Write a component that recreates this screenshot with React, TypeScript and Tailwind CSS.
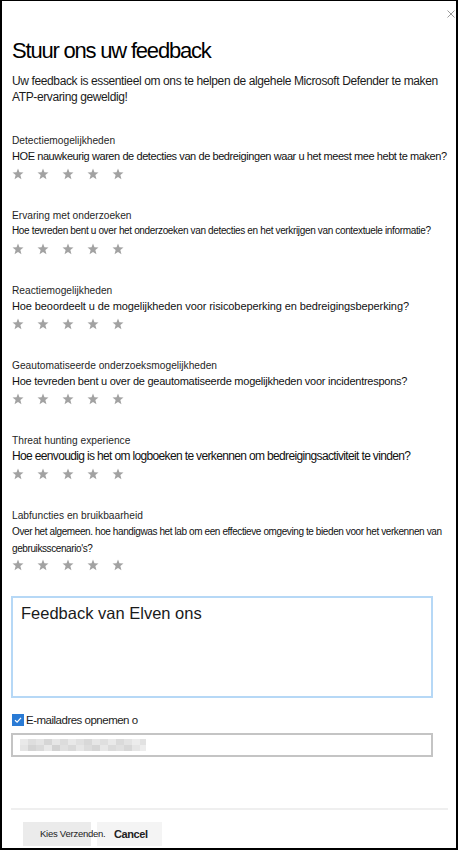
import React from 'react';

type Section = {
  label: string;
  question: React.ReactNode;
  qClass: string;
  starsClass?: string;
};

const sections: Section[] = [
  {
    label: 'Detectiemogelijkheden',
    question: 'HOE nauwkeurig waren de detecties van de bedreigingen waar u het meest mee hebt te maken?',
    qClass: 'text-[11px] leading-[16px] tracking-[-0.42px]',
  },
  {
    label: 'Ervaring met onderzoeken',
    question: 'Hoe tevreden bent u over het onderzoeken van detecties en het verkrijgen van contextuele informatie?',
    qClass: 'text-[10px] leading-[16px] tracking-[-0.35px]',
  },
  {
    label: 'Reactiemogelijkheden',
    question: 'Hoe beoordeelt u de mogelijkheden voor risicobeperking en bedreigingsbeperking?',
    qClass: 'text-[11px] leading-[16px] tracking-[-0.1px]',
  },
  {
    label: 'Geautomatiseerde onderzoeksmogelijkheden',
    question: 'Hoe tevreden bent u over de geautomatiseerde mogelijkheden voor incidentrespons?',
    qClass: 'text-[11px] leading-[16px] tracking-[-0.25px]',
  },
  {
    label: 'Threat hunting experience',
    question: 'Hoe eenvoudig is het om logboeken te verkennen om bedreigingsactiviteit te vinden?',
    qClass: 'text-[12px] leading-[16px] tracking-[-0.65px]',
  },
  {
    label: 'Labfuncties en bruikbaarheid',
    question: (
      <>
        Over het algemeen. hoe handigwas het lab om een effectieve omgeving te bieden voor het verkennen van
        <br />
        gebruiksscenario's?
      </>
    ),
    qClass: 'text-[10px] leading-[17px] tracking-[-0.4px]',
    starsClass: 'mt-[2px]',
  },
];

function Star() {
  return (
    <svg width="12" height="12" viewBox="0 0 24 24" className="shrink-0">
      <polygon
        points="12,1 14.9,8.6 23,9 16.7,14.1 18.9,22.5 12,17.8 5.1,22.5 7.3,14.1 1,9 9.1,8.6"
        fill="#a2a2a2"
      />
    </svg>
  );
}

function Stars({ className = 'mt-[4px]' }: { className?: string }) {
  return (
    <div className={`flex h-[12px] gap-[13px] ${className}`}>
      {[0, 1, 2, 3, 4].map((i) => (
        <Star key={i} />
      ))}
    </div>
  );
}

// pixelated, blurred-out e-mail address
const blur = [
  ['#e9e9e9', '#dedede', '#e4e4e4', '#d6d6d6', '#e6e6e6', '#dcdcdc', '#e8e8e8', '#e0e0e0', '#d8d8d8', '#e6e6e6', '#dfdfdf', '#e9e9e9', '#dadada', '#e3e3e3', '#ececec', '#e2e2e2'],
  ['#e4e4e4', '#d4d4d4', '#dadada', '#e8e8e8', '#d2d2d2', '#e0e0e0', '#d9d9d9', '#e6e6e6', '#dcdcdc', '#d5d5d5', '#e7e7e7', '#dbdbdb', '#e0e0e0', '#d7d7d7', '#e5e5e5', '#ededed'],
];

function BlurredEmail() {
  return (
    <svg width="126" height="12" viewBox="0 0 126 12">
      {blur.map((row, r) =>
        row.map((c, i) => <rect key={`${r}-${i}`} x={i * 8} y={r * 6} width="8" height="6" fill={c} />)
      )}
    </svg>
  );
}

export default function App() {
  return (
    <div className="relative flex h-[850px] w-[458px] flex-col border-t border-b-2 border-l-2 border-r-2 border-black bg-white pl-[10px] font-['Liberation_Sans',Arial,sans-serif] text-[#111]">
      {/* close */}
      <svg width="8" height="8" viewBox="0 0 8 8" className="absolute right-[1px] top-[9px]">
        <path d="M0.5 0.5 L7.5 7.5 M7.5 0.5 L0.5 7.5" stroke="#9a9a9a" strokeWidth="1" />
      </svg>

      <h1 className="mt-[36px] text-[22px] leading-[28px] tracking-[-1.2px] text-black">Stuur ons uw feedback</h1>
      <p className="mt-[8px] whitespace-nowrap text-[12px] leading-[16px] tracking-[-0.38px] text-[#1b1b1b]">
        Uw feedback is essentieel om ons te helpen de algehele Microsoft Defender te maken
        <br />
        ATP-ervaring geweldig!
      </p>

      <div className="mt-[28px] flex flex-col gap-[28px]">
        {sections.map((s) => (
          <div key={s.label} className="flex flex-col">
            <div className="text-[10.2px] leading-[15px] text-[#1f1f1f]">{s.label}</div>
            <div className={`whitespace-nowrap text-[#111] ${s.qClass}`}>{s.question}</div>
            <Stars className={s.starsClass} />
          </div>
        ))}
      </div>

      {/* feedback text box */}
      <div className="ml-[-1px] mt-[25px] h-[102px] w-[422px] border-2 border-[#b6d8f6] px-[8px] pt-[5px] text-[16.5px] leading-[20px] text-[#1a1a1a]">
        Feedback van Elven ons
      </div>

      <label className="mt-[16px] flex h-[12px] items-center gap-[2px]">
        <span className="flex h-[12px] w-[12px] items-center justify-center bg-[#2a7bd5]">
          <svg width="10" height="10" viewBox="0 0 10 10">
            <path d="M2 5.2 L4.1 7.2 L8 2.8" stroke="#fff" strokeWidth="1.2" fill="none" />
          </svg>
        </span>
        <span className="text-[11.5px] leading-[12px] tracking-[-0.5px] text-[#1b1b1b]">E-mailadres opnemen o</span>
      </label>

      <div className="ml-[-1px] mt-[7px] flex h-[24px] w-[422px] items-center border-2 border-[#c4c4c4] pl-[7px]">
        <BlurredEmail />
      </div>

      <div className="ml-[-1px] mt-[51px] h-[2px] w-[437px] bg-[#efefef]" />

      <div className="ml-[11px] mt-[12px] flex gap-[6px]">
        <button className="relative z-10 flex h-[24px] w-[68px] items-center bg-[#ebebeb] pl-[17px]">
          <span className="whitespace-nowrap text-[9.5px] tracking-[-0.25px] text-[#222]">Kies Verzenden.</span>
        </button>
        <button className="flex h-[24px] w-[65px] items-center bg-[#f4f4f4] pl-[17px]">
          <span className="text-[11px] font-semibold tracking-[-0.4px] text-[#222]">Cancel</span>
        </button>
      </div>
    </div>
  );
}
